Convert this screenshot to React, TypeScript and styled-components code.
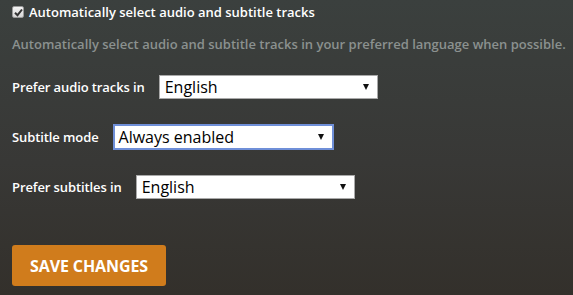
import React from "react";
import styled, { createGlobalStyle } from "styled-components";

const Global = createGlobalStyle`
  html, body { margin: 0; padding: 0; }
  body {
    width: 573px;
    height: 295px;
    overflow: hidden;
    background: linear-gradient(180deg, #3b403e 0%, #383836 55%, #33302b 100%);
    font-family: "Open Sans", "Noto Sans", sans-serif;
  }
`;

const Page = styled.div`
  box-sizing: border-box;
  width: 573px;
  height: 295px;
  padding: 3px 12px 0 12px;
  display: flex;
  flex-direction: column;
`;

const CheckRow = styled.label`
  display: flex;
  align-items: center;
  gap: 5px;
  height: 18px;
  color: #ffffff;
  font-size: 13px;
  font-weight: 600;
`;

const Box = styled.span`
  box-sizing: border-box;
  width: 12px;
  height: 12px;
  border-radius: 2px;
  background: linear-gradient(180deg, #f4f4f4, #d6d6d6);
  border: 1px solid #9a9a9a;
  display: flex;
  align-items: center;
  justify-content: center;
`;

const Description = styled.p`
  margin: 14px 0 0 0;
  color: #8b918f;
  font-size: 13px;
  font-weight: 600;
  line-height: 18px;
  white-space: nowrap;
`;

const Field = styled.div<{ $top: number }>`
  display: flex;
  align-items: center;
  gap: 14px;
  margin-top: ${(p) => p.$top}px;
`;

const Label = styled.span`
  color: #ffffff;
  font-size: 13px;
  font-weight: 600;
  letter-spacing: -0.1px;
`;

const SelectBox = styled.div<{ $focused?: boolean; $w: number }>`
  position: relative;
  box-sizing: border-box;
  width: ${(p) => p.$w}px;
  height: ${(p) => (p.$focused ? 26 : 24)}px;
  background: #ffffff;
  border: ${(p) => (p.$focused ? "2px solid #6f8fd8" : "1px solid #a9a9a9")};
  display: flex;
  align-items: center;
  padding-left: ${(p) => (p.$focused ? 4 : 5)}px;
  color: #000000;
  font-size: 16px;
  font-family: "Open Sans", "Noto Sans", sans-serif;
`;

const Arrow = styled.svg`
  position: absolute;
  right: 8px;
  top: 50%;
  margin-top: -3px;
`;

const SaveButton = styled.button`
  margin-top: 46px;
  align-self: flex-start;
  width: 154px;
  height: 41px;
  border: none;
  border-radius: 3px;
  background: #d07c1c;
  color: #ffffff;
  font-family: "Open Sans", "Noto Sans", sans-serif;
  font-weight: 700;
  font-size: 16px;
  letter-spacing: -0.1px;
  text-transform: uppercase;
  padding: 0;
`;

function Select({ value, width, focused }: { value: string; width: number; focused?: boolean }) {
  return (
    <SelectBox $w={width} $focused={focused}>
      {value}
      <Arrow width="6" height="6" viewBox="0 0 6 6">
        <path d="M0 0 H6 L3 6 Z" fill="#111" />
      </Arrow>
    </SelectBox>
  );
}

export default function App() {
  return (
    <>
      <Global />
      <Page>
        <CheckRow>
          <Box>
            <svg width="9" height="9" viewBox="0 0 9 9">
              <path d="M1 4.8 L3.5 7.2 L8 1.5" stroke="#333" strokeWidth="2" fill="none" />
            </svg>
          </Box>
          Automatically select audio and subtitle tracks
        </CheckRow>
        <Description>
          Automatically select audio and subtitle tracks in your preferred language when possible.
        </Description>
        <Field $top={22}>
          <Label>Prefer audio tracks in</Label>
          <Select value="English" width={219} />
        </Field>
        <Field $top={25}>
          <Label>Subtitle mode</Label>
          <Select value="Always enabled" width={221} focused />
        </Field>
        <Field $top={25}>
          <Label>Prefer subtitles in</Label>
          <Select value="English" width={219} />
        </Field>
        <SaveButton>Save changes</SaveButton>
      </Page>
    </>
  );
}
